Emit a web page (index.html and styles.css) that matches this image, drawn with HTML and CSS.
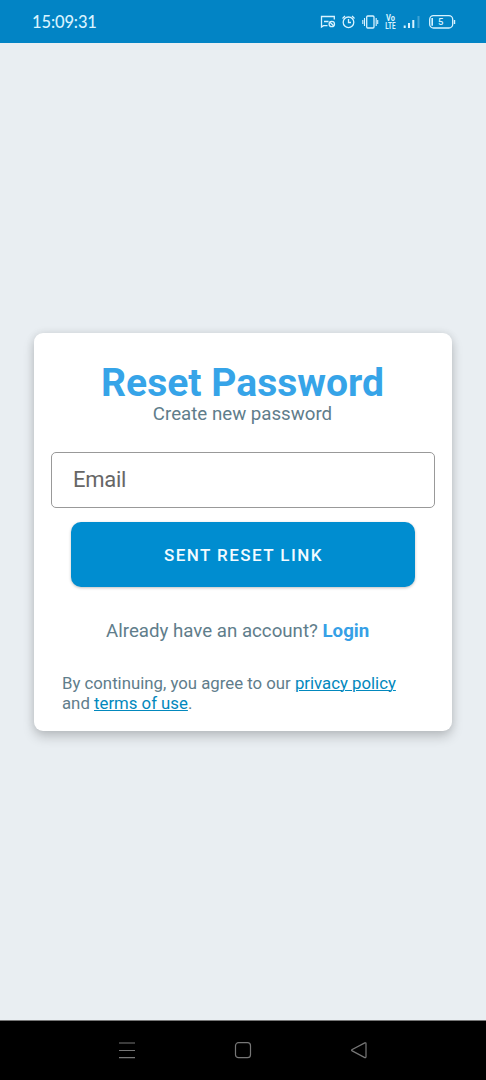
FILE: index.html
```html
<!DOCTYPE html>
<html lang="en">
<head>
<meta charset="utf-8">
<title>Reset Password</title>
<link rel="stylesheet" href="styles.css">
</head>
<body>
<div class="screen">
  <header class="status-bar">
    <span class="clock">15:09:31</span>
    <svg class="status-icons" width="138" height="20" viewBox="320 12 138 20" fill="none" stroke="#d9f3ff" stroke-width="1.3">
      <path d="M334.300 19.500V16.500H321.500V27L323.500 25.700H327.500M324 21.500H328.500"/>
      <circle cx="331.800" cy="24" r="2.700"/><path d="M330 22.200L333.600 25.800"/>
      <circle cx="348.500" cy="22.300" r="5.300"/><path d="M348.500 19V22.500H351M342.500 18.500L345 16M352 16L354.500 18.500"/>
      <rect x="366.700" y="16" width="7.300" height="12" rx="1"/><path d="M364.500 18V26M376.200 18V26M362.800 20V24M377.700 20V24" stroke-width="1.1"/>
      <g class="volte"><text transform="translate(386 21.300) scale(.88 1)">Vo</text><text transform="translate(385.300 28.500) scale(.75 1)">LTE</text></g>
      <path d="M404.700 25.500V28M409 23V28M413.300 20V28" stroke-width="2"/><path d="M418.500 16V28" stroke-width="2" stroke-opacity=".28"/>
      <rect x="429.700" y="15.700" width="23" height="12.300" rx="3.800"/><path d="M454.500 20V24" stroke-width="1.400"/><path d="M432.200 18V25.700" stroke-width="1.600"/>
      <text class="battery" x="438" y="25.200">5</text>
    </svg>
  </header>
  <main class="content">
    <section class="card">
      <h1 class="title">Reset Password</h1>
      <p class="subtitle">Create new password</p>
      <input class="email" type="email" placeholder="Email" aria-label="Email">
      <button class="submit" type="button">SENT RESET LINK</button>
      <p class="login">Already have an account? <a class="login-link">Login</a></p>
      <p class="terms">By continuing, you agree to our <a class="link">privacy policy</a><br>and <a class="link">terms of use</a>.</p>
    </section>
  </main>
  <nav class="nav-bar">
    <svg width="18" height="18" viewBox="0 0 18 18"><path d="M1 2H17M1 9.500H17M1 16.700H17"/></svg>
    <svg width="18" height="18" viewBox="0 0 18 18"><rect x="1.500" y="1.700" width="15" height="15" rx="3"/></svg>
    <svg width="18" height="18" viewBox="0 0 18 18"><path d="M14.800 1.900L2.200 8.500Q1 9.200 2.200 9.900L14.800 16.600Q16 17 16 15.800V2.700Q16 1.400 14.800 1.900Z"/></svg>
  </nav>
</div>
</body>
</html>
```
FILE: styles.css
```css
* { box-sizing: border-box; }
body { margin: 0; font-family: Roboto, sans-serif; background: #e9eef2; }
.screen { display: flex; flex-direction: column; width: 486px; height: 1080px; }
.status-bar {
  height: 43px; padding: 0 28px 0 32px; background: #0284c5;
  display: flex; align-items: center; justify-content: space-between;
}
.clock { font: 500 16.5px/20px Lato, sans-serif; letter-spacing: -.12px; color: #d9f3ff; }
.volte { font: 700 8.5px Roboto, sans-serif; fill: #d9f3ff; stroke: none; }
.battery { font: 500 9.5px Roboto, sans-serif; fill: #d9f3ff; stroke: none; }
.content { flex: 1; display: flex; align-items: center; justify-content: center; background: #e9eef2; }
.card {
  width: 418px; height: 398px; padding: 30px 17px 0; background: #fff; border-radius: 9px;
  box-shadow: 0 6px 12px rgba(0,0,0,.18), 0 0 9px rgba(0,0,0,.09);
  display: flex; flex-direction: column;
}
.title { margin: 0 1px 0 0; font-size: 39.1px; line-height: 40px; font-weight: 700; text-align: center; color: #36a4e8; white-space: nowrap; }
.subtitle { margin: 0 1px 0 0; font-size: 18.7px; line-height: 22px; text-align: center; color: #607d8b; }
.email {
  height: 56px; margin: 27px 0 0; padding: 0 21px; border: 1.5px solid #999; border-radius: 5px;
  background: #fff; font: 400 22px/26px Roboto, sans-serif; letter-spacing: -.25px; color: #666;
}
.email::placeholder { color: #666; opacity: 1; }
.submit {
  height: 65px; margin: 14.5px 20.5px 0 20.4px; padding: 0 0 0 1px; border: 0; border-radius: 10px; background: #008dd0;
  box-shadow: 0 1px 3px rgba(0,0,0,.25);
  font: 500 17px/20px Roboto, sans-serif; letter-spacing: 1.45px; color: #f3fbff;
}
.login { margin: 32px 0 0 55px; font-size: 18.7px; line-height: 24px; color: #607d8b; white-space: nowrap; }
.login-link { color: #36a0e6; font-weight: 700; }
.terms { margin: 31px 0 0 11px; font-size: 16.77px; line-height: 19.5px; color: #607d8b; white-space: nowrap; }
.link { color: #0288bd; text-decoration: underline; text-decoration-thickness: 1px; }
.nav-bar {
  height: 60px; padding: 0 118px 2px; background: #000; border-top: 1px solid #777;
  display: flex; align-items: center; justify-content: space-between;
}
.nav-bar svg { fill: none; stroke: #777; stroke-width: 1.2; }
```
